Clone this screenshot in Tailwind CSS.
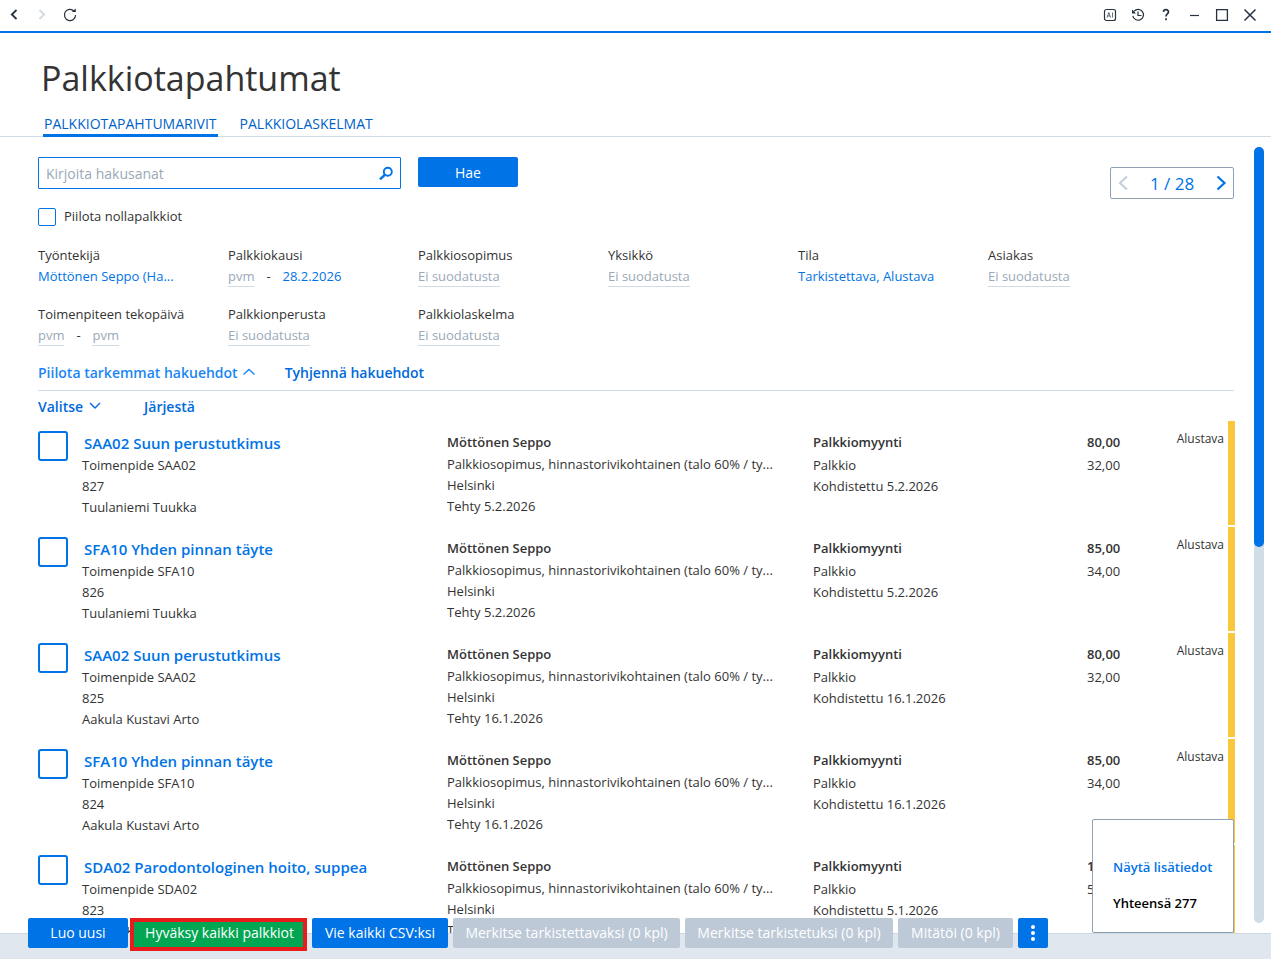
<!DOCTYPE html>
<html lang="fi">
<head>
    <meta charset="UTF-8">
    <meta name="viewport" content="width=device-width, initial-scale=1.0">
    <title>Palkkiotapahtumat</title>
    <script src="https://cdn.jsdelivr.net/npm/@tailwindcss/browser@4"></script>
</head>
<body class="h-screen flex flex-col overflow-hidden bg-white text-[#333333] text-[13px] leading-[21px] font-['Open_Sans','Noto_Sans',sans-serif]">
    <!-- Window bar -->
    <header class="flex items-center justify-between h-[33px] shrink-0 border-b-2 border-[#0073e6] pl-[6px] pr-[13px] pb-[2px] text-[#26323f]">
        <div class="flex items-center gap-3">
            <button aria-label="Takaisin">
                <svg class="w-4 h-4" viewBox="0 0 16 16" fill="none" stroke="currentColor" stroke-width="1.800"><path d="M10.500 3 5.800 7.500l4.700 4.500"/></svg>
            </button>
            <button aria-label="Eteenpäin" class="text-[#d0dae4]">
                <svg class="w-4 h-4" viewBox="0 0 16 16" fill="none" stroke="currentColor" stroke-width="1.800"><path d="m5.500 3 4.700 4.500L5.500 12"/></svg>
            </button>
            <button aria-label="Päivitä">
                <svg class="w-4 h-4" viewBox="0 0 16 16" fill="none" stroke="currentColor" stroke-width="1.200"><path d="M12 4A5.600 5.600 0 1 0 13.600 8"/><path d="M9.800 5h4V1.600z" fill="currentColor" stroke="none"/></svg>
            </button>
        </div>
        <div class="flex items-center gap-3">
            <button aria-label="AI">
                <svg class="w-4 h-4" viewBox="0 0 16 16" fill="none" stroke="currentColor"><rect x="2.500" y="2.500" width="11" height="11" rx="2" stroke-width="1.200"/><path d="m5 10.500 1.800-5 1.800 5M5.700 9h2.200M10.500 5.500v5" stroke-width=".7"/></svg>
            </button>
            <button aria-label="Historia">
                <svg class="w-4 h-4" viewBox="0 0 16 16" fill="none" stroke="currentColor" stroke-width="1.200"><path d="M4 4.300a5.400 5.400 0 1 1-1.200 4.500"/><path d="M8 4.500V8.500h3.500"/><path d="M2 2.500v4h4z" fill="currentColor" stroke="none"/></svg>
            </button>
            <button aria-label="Ohje">
                <svg class="w-4 h-4" viewBox="0 0 16 16" fill="none" stroke="currentColor" stroke-width="1.700"><path d="M5.500 4.800C5.800 1.900 10.600 2 10.500 5c-.1 2-2.500 2-2.500 4.500"/><path d="M8 11.200v2"/></svg>
            </button>
            <button aria-label="Pienennä">
                <svg class="w-4 h-4" viewBox="0 0 16 16" fill="none" stroke="currentColor" stroke-width="1.200"><path d="M4 8.500h9"/></svg>
            </button>
            <button aria-label="Suurenna">
                <svg class="w-4 h-4" viewBox="0 0 16 16" fill="none" stroke="currentColor" stroke-width="1.300"><path d="M2.600 2.600h10.800v10.800H2.600z"/></svg>
            </button>
            <button aria-label="Sulje">
                <svg class="w-4 h-4" viewBox="0 0 16 16" fill="none" stroke="currentColor" stroke-width="1.500"><path d="m2.500 2.500 11 11M13.500 2.500l-11 11"/></svg>
            </button>
        </div>
    </header>

    <!-- Title and tabs -->
    <div class="shrink-0 border-b border-[#cfdbe6] pt-5 pl-[41px]">
        <h1 class="text-[34px] leading-[50px]">Palkkiotapahtumat</h1>
        <nav class="flex gap-[21px] pl-[2px] text-[14px] leading-[20px] text-[#0062c8]">
            <a href="#" class="mt-[11px] -mb-px px-px border-b-[3px] border-[#0073e6]">PALKKIOTAPAHTUMARIVIT</a>
            <a href="#" class="mt-[11px] -mb-px px-px border-b-[3px] border-transparent">PALKKIOLASKELMAT</a>
        </nav>
    </div>

    <main class="relative flex flex-1 min-h-0 pl-[38px] pr-[7px] gap-[19px]">
        <div class="flex-1 min-w-0 overflow-hidden pt-5 pr-px">
            <form class="flex items-start justify-between">
                <div>
                    <div class="flex items-start gap-[17px]">
                        <div class="flex items-center w-[363px] h-8 border border-[#0073e6] rounded-[1px] pl-[7px] pr-[6px]">
                            <input type="text" aria-label="Hakusanat" placeholder="Kirjoita hakusanat" class="flex-1 min-w-0 text-[14px] outline-none placeholder:text-[#9aa9b8]">
                            <button type="button" aria-label="Etsi">
                                <svg class="w-4 h-4" viewBox="0 0 16 16" fill="none" stroke="#0073e6"><circle cx="9.800" cy="6.800" r="4" stroke-width="1.900"/><path d="M6.800 9.800 2 14.300" stroke-width="2.500"/></svg>
                            </button>
                        </div>
                        <button type="button" class="w-[100px] h-[30px] rounded-[2px] bg-[#0073e6] text-white text-[14px]">Hae</button>
                    </div>
                    <label class="flex items-center gap-2 mt-[17px]">
                        <input type="checkbox" class="appearance-none w-[18px] h-[18px] border border-[#0073e6] rounded-[2px]">
                        Piilota nollapalkkiot
                    </label>
                </div>
                <div class="flex items-center justify-between w-[124px] h-8 mt-[10px] px-1 border border-[#8fa1b3] rounded-[2px] text-[17px] text-[#0073e6]">
                    <button type="button" aria-label="Edellinen sivu">
                        <svg class="w-4 h-4" viewBox="0 0 16 16" fill="none" stroke="#c3ced9" stroke-width="2"><path d="M12 1.500 5 8l7 6.500"/></svg>
                    </button>
                    <span>1 / 28</span>
                    <button type="button" aria-label="Seuraava sivu">
                        <svg class="w-4 h-4" viewBox="0 0 16 16" fill="none" stroke="currentColor" stroke-width="2.200"><path d="m4.500 1.500 7 6.500-7 6.500"/></svg>
                    </button>
                </div>
            </form>

            <!-- Filters -->
            <div class="grid grid-cols-6 gap-y-4 mt-[17px] pr-14 whitespace-nowrap">
                <div>
                    <div class="leading-[22px]">Työntekijä</div>
                    <button class="text-[#0073e6]">Möttönen Seppo (Ha...</button>
                </div>
                <div>
                    <div class="leading-[22px]">Palkkiokausi</div>
                    <div class="flex items-end">
                        <button class="leading-[19px] text-[#9aa9b8] border-b border-[#cfdbe6]">pvm</button>
                        <span class="w-7 text-center">-</span>
                        <button class="text-[#0073e6]">28.2.2026</button>
                    </div>
                </div>
                <div>
                    <div class="leading-[22px]">Palkkiosopimus</div>
                    <button class="leading-[19px] text-[#9aa9b8] border-b border-[#cfdbe6]">Ei suodatusta</button>
                </div>
                <div>
                    <div class="leading-[22px]">Yksikkö</div>
                    <button class="leading-[19px] text-[#9aa9b8] border-b border-[#cfdbe6]">Ei suodatusta</button>
                </div>
                <div>
                    <div class="leading-[22px]">Tila</div>
                    <button class="text-[#0073e6]">Tarkistettava, Alustava</button>
                </div>
                <div>
                    <div class="leading-[22px]">Asiakas</div>
                    <button class="leading-[19px] text-[#9aa9b8] border-b border-[#cfdbe6]">Ei suodatusta</button>
                </div>
                <div>
                    <div class="leading-[22px]">Toimenpiteen tekopäivä</div>
                    <div class="flex items-end">
                        <button class="leading-[19px] text-[#9aa9b8] border-b border-[#cfdbe6]">pvm</button>
                        <span class="w-7 text-center">-</span>
                        <button class="leading-[19px] text-[#9aa9b8] border-b border-[#cfdbe6]">pvm</button>
                    </div>
                </div>
                <div>
                    <div class="leading-[22px]">Palkkionperusta</div>
                    <button class="leading-[19px] text-[#9aa9b8] border-b border-[#cfdbe6]">Ei suodatusta</button>
                </div>
                <div>
                    <div class="leading-[22px]">Palkkiolaskelma</div>
                    <button class="leading-[19px] text-[#9aa9b8] border-b border-[#cfdbe6]">Ei suodatusta</button>
                </div>
            </div>

            <div class="flex items-center gap-[30px] h-[37px] mt-2 text-[14px] font-semibold text-[#0069dc] border-b border-[#cfdbe6]">
                <button class="flex items-center gap-[5px] text-[#1a86f5]">
                    Piilota tarkemmat hakuehdot
                    <svg class="w-3 h-3" viewBox="0 0 12 12" fill="none" stroke="currentColor" stroke-width="1.400"><path d="M.5 8.500 6 3.500l5.500 5"/></svg>
                </button>
                <button>Tyhjennä hakuehdot</button>
            </div>
            <div class="flex items-center gap-[43px] h-[30px] text-[14px] font-semibold text-[#0069dc]">
                <button class="flex items-center gap-[6px]">
                    Valitse
                    <svg class="w-3 h-3" viewBox="0 0 12 12" fill="none" stroke="currentColor" stroke-width="1.400"><path d="m1 3 5 5 5-5"/></svg>
                </button>
                <button>Järjestä</button>
            </div>

            <ul id="rows" class="-mr-px"></ul>
        </div>

        <!-- Scroll bar -->
        <div class="w-[10px] shrink-0 mt-[10px] mb-[10px] rounded-full bg-[#d0dce6]">
            <div class="h-[400px] rounded-full bg-[#0073e6]"></div>
        </div>

        <div class="absolute bottom-0 right-[37px] w-[142px] h-[114px] pt-[37px] pl-5 bg-white border border-[#8fa1b3] rounded-[2px] font-semibold">
            <button class="block text-[#0073e6]">Näytä lisätiedot</button>
            <div class="mt-[15px] text-black">Yhteensä 277</div>
        </div>
    </main>

    <footer class="relative shrink-0 h-[26px] bg-[#e0e7ee] border-t border-[#cdd7e1]">
        <div class="flex -mt-4 pl-7 text-[14px] leading-[30px] text-white whitespace-nowrap">
            <button class="w-[100px] mr-[4px] rounded-[2px] bg-[#0073e6]">Luo uusi</button>
            <div class="relative mr-[5px]">
                <button class="w-[175px] rounded-[2px] bg-[#00a651]">Hyväksy kaikki palkkiot</button>
                <div class="absolute -left-[2px] top-0 w-[177px] h-[33px] border-4 border-[#e81c1c] pointer-events-none"></div>
            </div>
            <button class="w-[136px] mr-[5px] rounded-[2px] bg-[#0073e6]">Vie kaikki CSV:ksi</button>
            <button class="w-[227px] mr-[5px] rounded-[2px] bg-[#bdc9d7]">Merkitse tarkistettavaksi (0 kpl)</button>
            <button class="w-[208px] mr-[5px] rounded-[2px] bg-[#bdc9d7]">Merkitse tarkistetuksi (0 kpl)</button>
            <button class="w-[115px] mr-[5px] rounded-[2px] bg-[#bdc9d7]">Mitätöi (0 kpl)</button>
            <button aria-label="Lisää toimintoja" class="flex items-center justify-center w-[30px] rounded-[2px] bg-[#0073e6]">
                <svg class="w-4 h-4" viewBox="0 0 16 16" fill="currentColor"><circle cx="8" cy="2" r="2"/><circle cx="8" cy="8" r="2"/><circle cx="8" cy="14" r="2"/></svg>
            </button>
        </div>
    </footer>

    <script>
        const rows = [
            { code: "SAA02", name: "Suun perustutkimus", id: 827, patient: "Tuulaniemi Tuukka", date: "5.2.2026", sale: "80,00", fee: "32,00" },
            { code: "SFA10", name: "Yhden pinnan täyte", id: 826, patient: "Tuulaniemi Tuukka", date: "5.2.2026", sale: "85,00", fee: "34,00" },
            { code: "SAA02", name: "Suun perustutkimus", id: 825, patient: "Aakula Kustavi Arto", date: "16.1.2026", sale: "80,00", fee: "32,00" },
            { code: "SFA10", name: "Yhden pinnan täyte", id: 824, patient: "Aakula Kustavi Arto", date: "16.1.2026", sale: "85,00", fee: "34,00" },
            { code: "SDA02", name: "Parodontologinen hoito, suppea", id: 823, patient: "Aakula Kustavi Arto", date: "5.1.2026", sale: "130,00", fee: "52,00" }
        ];

        document.getElementById("rows").innerHTML = rows.map(row => `
            <li class="grid grid-cols-[44px_365fr_366fr_274fr_141fr] h-[104px] mb-[2px] pt-[10px] border-r-[7px] border-[#fac63c] whitespace-nowrap">
                <input type="checkbox" aria-label="Valitse ${row.id}" class="appearance-none w-[30px] h-[30px] border-2 border-[#0073e6] rounded-[3px]">
                <div class="min-w-0">
                    <a href="#" class="block pl-[2px] text-[15px] leading-[24px] font-semibold text-[#0073e6]">${row.code} ${row.name}</a>
                    <div>Toimenpide ${row.code}</div>
                    <div>${row.id}</div>
                    <div>${row.patient}</div>
                </div>
                <div class="min-w-0">
                    <div class="leading-[23px] font-semibold">Möttönen Seppo</div>
                    <div>Palkkiosopimus, hinnastorivikohtainen (talo 60% / ty...</div>
                    <div>Helsinki</div>
                    <div>Tehty ${row.date}</div>
                </div>
                <div class="min-w-0">
                    <div class="leading-[23px] mb-px font-semibold">Palkkiomyynti</div>
                    <div>Palkkio</div>
                    <div>Kohdistettu ${row.date}</div>
                </div>
                <div class="flex justify-between min-w-0 pr-1">
                    <div>
                        <div class="leading-[23px] mb-px font-semibold">${row.sale}</div>
                        <div>${row.fee}</div>
                    </div>
                    <div class="text-[12px] leading-[16px]">Alustava</div>
                </div>
            </li>`).join("");
    </script>
</body>
</html>
